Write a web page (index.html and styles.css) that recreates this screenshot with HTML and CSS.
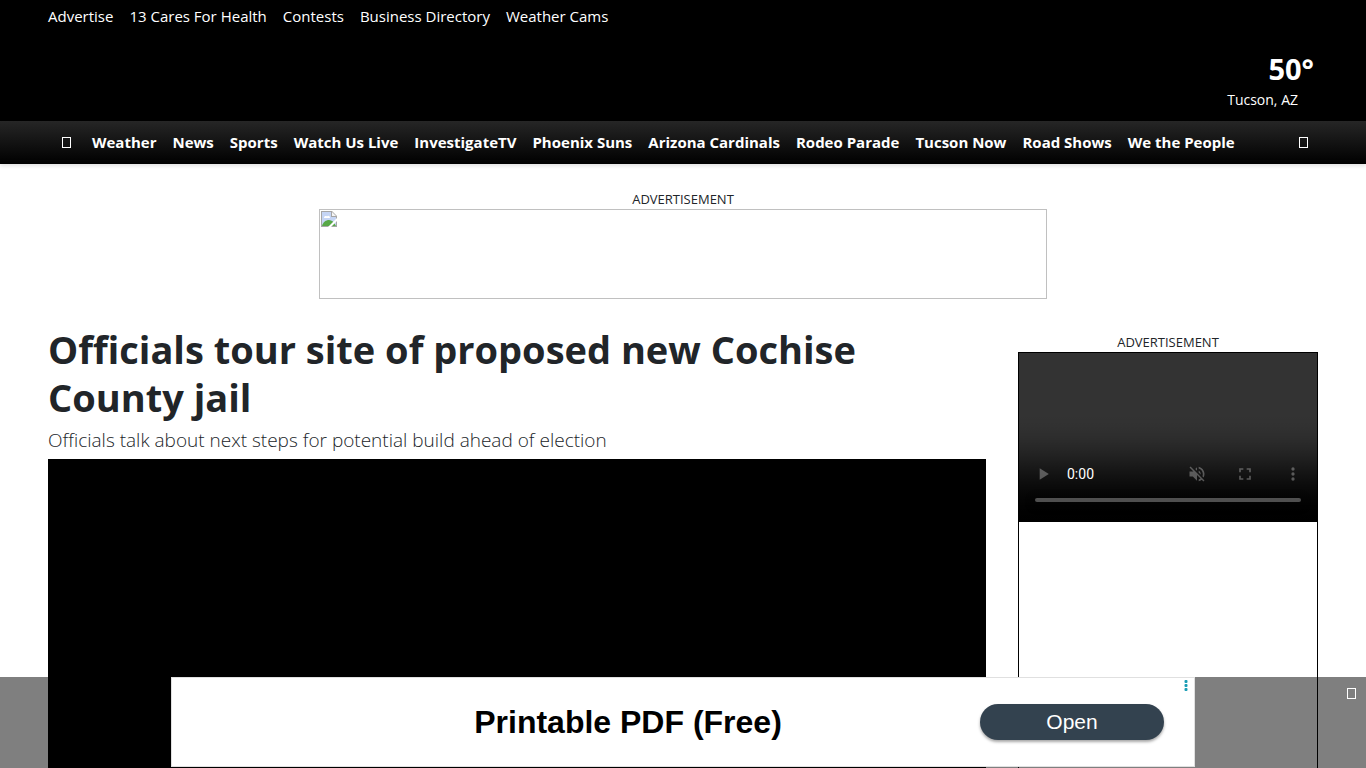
FILE: index.html
```html
<!DOCTYPE html>
<html lang="en">
<head>
<meta charset="utf-8">
<meta name="viewport" content="width=device-width, initial-scale=1">
<title>Officials tour site of proposed new Cochise County jail</title>
<link rel="stylesheet" href="styles.css">
</head>
<body>
<header class="masthead">
  <nav class="utility" aria-label="Utility">
    <a href="#">Advertise</a>
    <a href="#">13 Cares For Health</a>
    <a href="#">Contests</a>
    <a href="#">Business Directory</a>
    <a href="#">Weather Cams</a>
  </nav>
  <a class="conditions" href="#">
    <strong class="temperature">50°</strong>
    <span class="city">Tucson, AZ</span>
  </a>
</header>
<nav class="navbar" aria-label="Main">
  <button class="nav-button" type="button" aria-label="Menu"><span class="box-glyph"></span></button>
  <div class="nav-links">
    <a href="#">Weather</a>
    <a href="#">News</a>
    <a href="#">Sports</a>
    <a href="#">Watch Us Live</a>
    <a href="#">InvestigateTV</a>
    <a href="#">Phoenix Suns</a>
    <a href="#">Arizona Cardinals</a>
    <a href="#">Rodeo Parade</a>
    <a href="#">Tucson Now</a>
    <a href="#">Road Shows</a>
    <a href="#">We the People</a>
  </div>
  <button class="nav-button search-button" type="button" aria-label="Search"><span class="box-glyph"></span></button>
</nav>
<section class="leaderboard" aria-label="Advertisement">
  <div class="ad-label">ADVERTISEMENT</div>
  <a class="leaderboard-frame" href="#" aria-label="Sponsored image">
    <svg width="16" height="16" viewBox="0 0 16 16" aria-hidden="true">
      <path d="M0 0h11l5 5v11H0z" fill="#a6a6a6"/>
      <path d="M1 1h9v5h5v9H1z" fill="#c5d5f5"/>
      <path d="M11 1l4 4h-4z" fill="#f5f5f5"/>
      <path d="M3 7c0-2 2-2.500 3-1.500C7 4 9 5 9 7z" fill="#fff"/>
      <path d="M1 15c1-4 4-6 7-6 3 0 5 2 7 6z" fill="#57a846"/>
      <path d="M7 16l9-9v3l-6 6z" fill="#fff"/>
    </svg>
  </a>
</section>
<div class="page">
  <main class="story">
    <h1>Officials tour site of proposed new Cochise County jail</h1>
    <p class="subheadline">Officials talk about next steps for potential build ahead of election</p>
    <div class="story-player"></div>
  </main>
  <aside class="rail">
    <div class="ad-label">ADVERTISEMENT</div>
    <div class="rail-ad">
      <video class="rail-video" controls muted aria-label="Advertisement video"></video>
    </div>
  </aside>
</div>
<aside class="sticky-ad" aria-label="Advertisement">
  <div class="banner">
    <span class="banner-title">Printable PDF (Free)</span>
    <a class="banner-open" href="#">Open</a>
    <button class="ad-options" type="button" aria-label="Ad options">
      <svg width="4" height="12" viewBox="0 0 4 12" fill="#1a9db5" aria-hidden="true"><rect x=".5" y="0" width="3" height="3" rx="1"/><rect x=".5" y="4" width="3" height="3" rx="1"/><rect x=".5" y="8" width="3" height="3" rx="1"/></svg>
    </button>
  </div>
  <button class="sticky-close" type="button" aria-label="Close"><span class="box-glyph"></span></button>
</aside>
</body>
</html>
```

FILE: styles.css
```css
* { box-sizing: border-box; }
html { scrollbar-width: none; }
body {
  margin: 0;
  background: #fff;
  color: #212529;
  font-family: "Open Sans", "Noto Sans", sans-serif;
  font-size: 15px;
  line-height: 24px;
}
a { color: inherit; text-decoration: none; }
button {
  padding: 0;
  border: 0;
  background: none;
  color: inherit;
  font: inherit;
  cursor: pointer;
}
.box-glyph {
  display: block;
  width: 9px;
  height: 11px;
  border: 1px solid #fff;
}

.masthead {
  display: flex;
  flex-direction: column;
  padding: 4px 48px 8px;
  background: #000;
  color: #fff;
}
.utility { display: flex; gap: 16px; }
.conditions {
  display: flex;
  flex-direction: column;
  align-items: flex-end;
  align-self: flex-end;
  padding-top: 24px;
}
.temperature {
  margin-right: 4px;
  font-size: 29px;
  line-height: 34px;
}
.city {
  margin-right: 20px;
  font-size: 14px;
  line-height: 27px;
}

.navbar {
  display: flex;
  align-items: center;
  height: 43px;
  padding: 0 54px 0 58px;
  background: linear-gradient(#262626, #000);
  box-shadow: 0 2px 4px rgba(0, 0, 0, .12);
  color: #fff;
  font-weight: 700;
}
.nav-button { padding: 4px; }
.nav-links {
  display: flex;
  gap: 16px;
  margin-left: 17px;
  padding-bottom: 2px;
  white-space: nowrap;
}
.search-button { margin-left: auto; }

.ad-label {
  font-size: 13px;
  line-height: 20px;
  text-align: center;
}
.leaderboard {
  display: flex;
  flex-direction: column;
  align-items: center;
  padding: 25px 16px 26px;
}
.leaderboard-frame {
  width: 100%;
  max-width: 728px;
  height: 90px;
  padding: 1px;
  border: 1px solid #c0c0c0;
}
.leaderboard-frame svg { display: block; }

.page {
  display: grid;
  grid-template-columns: minmax(0, 1fr) 300px;
  gap: 32px;
  padding: 0 48px;
}
h1 {
  margin: 0;
  font-size: 38px;
  font-weight: 700;
  line-height: 48px;
}
.subheadline {
  margin: 4px 0;
  font-size: 19px;
  font-weight: 300;
  line-height: 30px;
}
.story-player { aspect-ratio: 16 / 9; background: #000; }
.rail { padding-top: 7px; }
.rail-ad {
  min-height: 600px;
  border: 1px solid #000;
}
.rail-video {
  display: block;
  width: 100%;
  height: 169px;
  background: #000;
}

.sticky-ad {
  position: fixed;
  right: 0;
  bottom: 0;
  left: 0;
  display: flex;
  justify-content: center;
  padding-bottom: 1px;
  background: rgba(0, 0, 0, .5);
}
.banner {
  position: relative;
  display: grid;
  grid-template-columns: 1fr 184px;
  align-items: center;
  width: 100%;
  max-width: 1024px;
  height: 90px;
  padding-right: 30px;
  border: 1px solid #e0e0e0;
  background: #fff;
  color: #000;
  font-family: "Liberation Sans", Arial, sans-serif;
}
.banner-title {
  padding-left: 104px;
  font-size: 32px;
  font-weight: 700;
  line-height: 36px;
  text-align: center;
}
.banner-open {
  border-radius: 18px;
  background: #33424f;
  box-shadow: 0 2px 3px rgba(0, 0, 0, .35);
  color: #fff;
  font-size: 21px;
  line-height: 36px;
  text-align: center;
}
.ad-options {
  position: absolute;
  top: 2px;
  right: 6px;
  line-height: 0;
}
.sticky-close {
  position: absolute;
  top: 7px;
  right: 6px;
  padding: 4px;
}
```
